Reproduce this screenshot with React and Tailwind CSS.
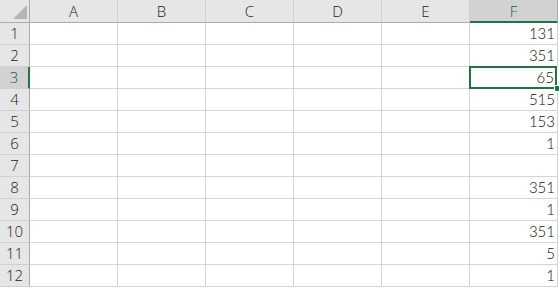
const cols = ["A", "B", "C", "D", "E", "F"];
const values = ["131", "351", "65", "515", "153", "1", "", "351", "1", "351", "5", "1"];

export default function App() {
  return (
    <div className="w-[559px] h-[288px] overflow-hidden bg-white font-['Open_Sans',sans-serif]">
      {/* column headers */}
      <div className="flex h-[23px]">
        <div className="relative w-[30px] shrink-0 bg-[#e6e6e6] border-r border-b border-[#ababab]">
          <svg className="absolute left-[13px] top-[5px]" width="14" height="14" viewBox="0 0 14 14">
            <polygon points="14,0 14,14 0,14" fill="#b4b4b4" />
          </svg>
        </div>
        {cols.map((c) =>
          c === "F" ? (
            <div
              key={c}
              className="w-[88px] shrink-0 flex items-center justify-center bg-[#d2d2d2] border-r border-[#ababab] border-b-2 border-b-[#217346] text-[15px] font-light text-[#1e5e3a] pt-[1px]"
            >
              {c}
            </div>
          ) : (
            <div
              key={c}
              className="w-[88px] shrink-0 flex items-center justify-center bg-[#e6e6e6] border-r border-r-[#d0d0d0] border-b border-b-[#ababab] text-[15px] font-light text-[#222]"
            >
              {c}
            </div>
          )
        )}
      </div>
      {values.map((v, i) => {
        const sel = i === 2;
        return (
          <div key={i} className="flex h-[22px]">
            <div
              className={
                sel
                  ? "w-[30px] shrink-0 flex items-center justify-center bg-[#d2d2d2] border-r-2 border-r-[#217346] border-b border-b-[#d0d0d0] text-[15px] font-light text-[#1e5e3a]"
                  : "w-[30px] shrink-0 flex items-center justify-center bg-[#e6e6e6] border-r border-r-[#ababab] border-b border-b-[#d0d0d0] text-[15px] font-light text-[#222]"
              }
            >
              {i + 1}
            </div>
            {cols.slice(0, 5).map((c) => (
              <div key={c} className="w-[88px] shrink-0 border-r border-b border-[#d4d4d4]" />
            ))}
            {sel ? (
              <div className="relative w-[88px] shrink-0 border-b border-[#d4d4d4]">
                <div className="absolute left-[-1px] top-[-1px] w-[88px] h-[23px] border-2 border-[#217346] flex items-center justify-end pr-[1px] font-['Lato',sans-serif] font-light text-[15px] text-[#111]">
                  {v}
                </div>
                <div className="absolute left-[85px] top-[19px] w-[5px] h-[5px] bg-[#217346] outline outline-1 outline-white" />
              </div>
            ) : (
              <div className="w-[88px] shrink-0 flex items-center justify-end pr-[2px] border-r border-b border-[#d4d4d4] font-['Lato',sans-serif] font-light text-[15px] text-[#111]">
                {v}
              </div>
            )}
          </div>
        );
      })}
    </div>
  );
}
